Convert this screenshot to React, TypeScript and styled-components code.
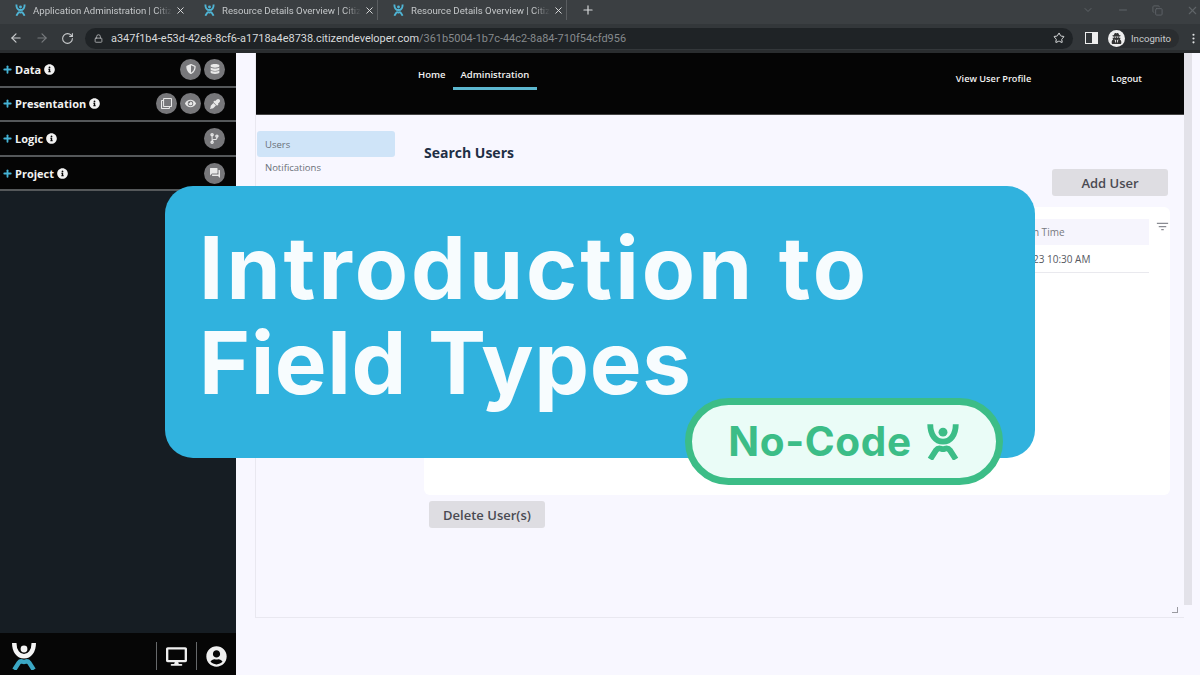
import React from 'react'
import styled, { createGlobalStyle } from 'styled-components'
import { ArrowLeft, ArrowRight, RotateCw, Plus, X, Star, Lock, ChevronDown, Minus, Copy, EllipsisVertical } from 'lucide-react'
import {
  FaInfoCircle,
  FaDatabase,
  FaEye,
  FaCodeBranch,
  FaDesktop,
  FaUserCircle,
  FaRegClone,
  FaUserSecret,
  FaShieldAlt,
  FaEyeDropper,
} from 'react-icons/fa'
import { MdFilterList, MdForum } from 'react-icons/md'

const GlobalStyle = createGlobalStyle`
  html, body {
    margin: 0;
    padding: 0;
    background: #f8f7ff;
  }
  #root {
    width: 1200px;
    height: 675px;
    overflow: hidden;
  }
`

const Page = styled.div`
  position: relative;
  width: 1200px;
  height: 675px;
  display: flex;
  flex-direction: column;
  font-family: 'Open Sans', sans-serif;
  overflow: hidden;
  background: #f8f7ff;
`

const TabStrip = styled.div`
  height: 24px;
  display: flex;
  align-items: center;
  background: #3b3f42;
  color: #c4c7c9;
  font-family: 'Roboto', sans-serif;
  font-size: 9.6px;
`

const Tab = styled.div<{ $divider?: boolean }>`
  width: 189px;
  height: 20px;
  margin-bottom: 4px;
  flex: none;
  display: flex;
  align-items: center;
  padding-left: 15px;
  box-sizing: border-box;
  border-right: ${(p) => (p.$divider ? '1px solid #5a5d60' : '1px solid transparent')};
  color: #c4c7c9;
`

const TabTitle = styled.span`
  margin-left: 7px;
  white-space: nowrap;
  -webkit-mask-image: linear-gradient(to right, #000 88%, transparent);
`

const TabClose = styled.span`
  margin-left: auto;
  margin-right: 2px;
  display: flex;
`

const NewTab = styled.div`
  margin: 0 0 4px 14px;
  color: #d8dadb;
  display: flex;
`

const WindowControls = styled.div`
  margin: 0 0 4px auto;
  display: flex;
  align-items: center;
  gap: 23px;
  padding-right: 1px;
  color: #5f6468;
`

const Toolbar = styled.div`
  height: 29px;
  display: flex;
  align-items: center;
  background: #33373a;
  border-bottom: 3px solid #2a2d2f;
  padding-top: 2px;
  box-sizing: border-box;
  color: #c9cbcd;
`

const NavButtons = styled.div`
  width: 85px;
  flex: none;
  display: flex;
  align-items: center;
  gap: 12px;
  padding-left: 9px;
  box-sizing: border-box;
`

const Omnibox = styled.div`
  width: 988px;
  height: 21px;
  flex: none;
  display: flex;
  align-items: center;
  border-radius: 11px;
  background: #1f2326;
  font-family: 'Roboto', sans-serif;
  font-size: 10.95px;
  padding: 0 8px 0 9px;
  box-sizing: border-box;
  color: #dfe1e2;
`

const UrlHost = styled.span`
  margin-left: 8px;
  color: #d8dadb;
`

const UrlPath = styled.span`
  color: #868a8d;
  flex: 1;
`

const ToolbarRight = styled.div`
  flex: 1;
  display: flex;
  align-items: center;
  padding-left: 12px;
  color: #dfe1e2;
`

const SidePanelIcon = styled.div`
  width: 11px;
  height: 10px;
  border: 1px solid #eee;
  background: linear-gradient(to right, #33373a 55%, #eee 55%);
`

const IncognitoPill = styled.div`
  display: flex;
  align-items: center;
  gap: 6px;
  margin-left: 10px;
  width: 71px;
  height: 19px;
  border-radius: 10px;
  background: #2a2d30;
  font-family: 'Roboto', sans-serif;
  font-size: 9.6px;
  color: #c9cbcd;
`

const IncognitoAvatar = styled.div`
  width: 17px;
  height: 17px;
  border-radius: 50%;
  background: #eee;
  color: #333;
  display: flex;
  align-items: center;
  justify-content: center;
`

const MenuDots = styled.div`
  margin-left: 8px;
  display: flex;
`

const Workspace = styled.div`
  flex: 1;
  display: flex;
  min-height: 0;
`

const Sidebar = styled.aside`
  width: 236px;
  flex: none;
  display: flex;
  flex-direction: column;
  background: #161d23;
`

const SideRow = styled.div`
  height: 34.6px;
  box-sizing: border-box;
  display: flex;
  align-items: center;
  padding: 0 11px 0 2px;
  background: #050505;
  border-bottom: 2px solid #55585a;
  color: #f2f2f2;
  font-size: 11px;
  font-weight: 700;
`

const SidePlus = styled.span`
  display: flex;
  color: #45b4d6;
  margin-right: 2px;
`

const SideInfo = styled.span`
  display: flex;
  margin-left: 3px;
  color: #f2f2f2;
`

const RoundIcons = styled.div`
  margin-left: auto;
  display: flex;
  gap: 3px;
`

const RoundIcon = styled.div`
  width: 21px;
  height: 21px;
  border-radius: 50%;
  background: #77777a;
  color: #e8e8e8;
  display: flex;
  align-items: center;
  justify-content: center;
`

const SideSpacer = styled.div`
  flex: 1;
`

const SideFooter = styled.div`
  height: 42px;
  flex: none;
  background: #060606;
  display: flex;
  align-items: center;
  padding: 4px 9px 0 11px;
  box-sizing: border-box;
  color: #efefef;
`

const FooterDivider = styled.div`
  width: 1px;
  height: 28px;
  background: #66686a;
`

const FooterTools = styled.div`
  margin-left: auto;
  display: flex;
  align-items: center;
  gap: 9px;
`

const Main = styled.main`
  flex: 1;
  display: flex;
  padding-left: 19px;
  background: #f8f7ff;
  min-width: 0;
`

const Panel = styled.div`
  width: 929px;
  height: 565px;
  flex: none;
  display: flex;
  flex-direction: column;
  box-sizing: border-box;
  border-left: 1px solid #e9e8f0;
  border-bottom: 1px solid #e9e8f0;
  position: relative;
`

const AppHeader = styled.header`
  height: 61px;
  flex: none;
  display: flex;
  background: #050505;
  color: #f2f2f2;
  font-size: 9.5px;
  font-weight: 600;
  border-bottom: 1px solid #444;
`

const HeaderNav = styled.nav`
  display: flex;
  padding-left: 155px;
`

const NavItem = styled.div<{ $active?: boolean }>`
  height: 37px;
  padding: 15px 8px 0 7px;
  box-sizing: border-box;
  border-bottom: ${(p) => (p.$active ? '3px solid #5cb7cf' : 'none')};
`

const HeaderRight = styled.div`
  margin-left: auto;
  display: flex;
  gap: 80px;
  padding: 19px 42px 0 0;
  font-size: 9.2px;
`

const PanelBody = styled.div`
  flex: 1;
  display: flex;
  min-height: 0;
`

const SubNav = styled.div`
  width: 168px;
  flex: none;
  padding: 16px 0 0 1px;
  box-sizing: border-box;
  font-size: 9.5px;
  color: #6a7078;
`

const SubNavItem = styled.div<{ $active?: boolean }>`
  width: 138px;
  height: ${(p) => (p.$active ? 26 : 21)}px;
  padding-left: 8px;
  box-sizing: border-box;
  display: flex;
  align-items: center;
  border-radius: 3px;
  background: ${(p) => (p.$active ? '#cfe4f8' : 'transparent')};
`

const Content = styled.div`
  width: 746px;
  display: flex;
  flex-direction: column;
`

const SearchTitle = styled.h2`
  margin: 29px 0 0;
  font-size: 14px;
  line-height: 18px;
  font-weight: 700;
  color: #1f2f45;
`

const ActionRow = styled.div`
  display: flex;
  justify-content: flex-end;
  padding-right: 2px;
  margin-top: 7px;
`

const GreyButton = styled.button`
  width: 116px;
  height: 27px;
  padding: 0;
  border: none;
  border-radius: 3px;
  background: #dedde2;
  color: #4a4a52;
  font-family: 'Open Sans', sans-serif;
  font-size: 13px;
  font-weight: 600;
`

const TableCard = styled.div`
  height: 288px;
  margin-top: 11px;
  box-sizing: border-box;
  padding: 12px 21px 0 0;
  border-radius: 6px;
  background: #fff;
  position: relative;
  font-size: 10px;
  color: #55585f;
`

const TableHead = styled.div`
  height: 26px;
  display: flex;
  align-items: center;
  padding-left: 568px;
  background: #f6f5fd;
  color: #77797f;
`

const TableRow = styled.div`
  height: 28px;
  display: flex;
  align-items: center;
  padding-left: 573px;
  border-bottom: 1px solid #e9e9ee;
  box-sizing: border-box;
`

const FilterButton = styled.div`
  position: absolute;
  top: 12px;
  right: 0;
  color: #8a8c92;
  display: flex;
`

const DeleteRow = styled.div`
  margin: 6px 0 0 5px;
`

const Scrollbar = styled.div`
  width: 8px;
  height: 552px;
  flex: none;
  background: #e3e2e9;
`

const ResizeHandle = styled.div`
  position: absolute;
  right: 6px;
  bottom: 4px;
  width: 5px;
  height: 5px;
  border-right: 1.5px solid #9a9aa0;
  border-bottom: 1.5px solid #9a9aa0;
`

const Banner = styled.div`
  position: absolute;
  left: 165px;
  top: 186px;
  width: 870px;
  height: 272px;
  box-sizing: border-box;
  padding: 34px 0 0 34px;
  border-radius: 28px;
  background: #30b2de;
`

const BannerLine = styled.div<{ $spacing: number }>`
  font-family: 'Inter', sans-serif;
  font-size: 87px;
  line-height: 95px;
  font-weight: 700;
  letter-spacing: ${(p) => p.$spacing}px;
  color: #f7fcfe;
  white-space: nowrap;
`

const Pill = styled.div`
  position: absolute;
  left: 685px;
  top: 398px;
  width: 318px;
  height: 87px;
  box-sizing: border-box;
  display: flex;
  align-items: center;
  justify-content: center;
  gap: 14px;
  border: 7px solid #3cbd87;
  border-radius: 44px;
  background: #eafcf7;
  color: #3cbd87;
  font-family: 'Inter', sans-serif;
  font-size: 40.5px;
  font-weight: 700;
  letter-spacing: 0.6px;
`

const Logo = ({ size, top, bottom }: { size: number; top: string; bottom: string }) => (
  <svg width={size} height={size * 1.1} viewBox='0 0 32 35' fill='none'>
    <circle cx='16' cy='8.5' r='4.2' fill={top} />
    <path d='M4 1C4 11 9 17.5 16 17.5C23 17.5 28 11 28 1' stroke={top} strokeWidth='5.5' />
    <path d='M4 34L9.5 25.5C12 22 14 24.5 16 24.5C18 24.5 20 22 22.5 25.5L28 34' stroke={bottom} strokeWidth='5.5' />
  </svg>
)

const sections = [
  { name: 'Data', icons: [<FaShieldAlt size={10} key='a' />, <FaDatabase size={10} key='b' />] },
  {
    name: 'Presentation',
    icons: [<FaRegClone size={11} key='a' />, <FaEye size={11} key='b' />, <FaEyeDropper size={10} key='c' />],
  },
  { name: 'Logic', icons: [<FaCodeBranch size={11} key='a' />] },
  { name: 'Project', icons: [<MdForum size={12} key='a' />] },
]

const tabs = ['Application Administration | Citiz', 'Resource Details Overview | Citiz', 'Resource Details Overview | Citiz']

const App = () => (
  <Page>
    <GlobalStyle />
    <TabStrip>
      {tabs.map((title, index) => (
        <Tab key={index} $divider={index > 0}>
          <Logo size={11} top='#4fb4d4' bottom='#4fb4d4' />
          <TabTitle>{title}</TabTitle>
          <TabClose>
            <X size={11} color='#e4e5e6' />
          </TabClose>
        </Tab>
      ))}
      <NewTab>
        <Plus size={14} />
      </NewTab>
      <WindowControls>
        <ChevronDown size={12} />
        <Minus size={12} />
        <Copy size={11} />
        <X size={13} />
      </WindowControls>
    </TabStrip>
    <Toolbar>
      <NavButtons>
        <ArrowLeft size={14} />
        <ArrowRight size={14} color='#777a7d' />
        <RotateCw size={13} />
      </NavButtons>
      <Omnibox>
        <Lock size={9} color='#c4c6c8' />
        <UrlHost>a347f1b4-e53d-42e8-8cf6-a1718a4e8738.citizendeveloper.com</UrlHost>
        <UrlPath>/361b5004-1b7c-44c2-8a84-710f54cfd956</UrlPath>
        <Star size={12} />
      </Omnibox>
      <ToolbarRight>
        <SidePanelIcon />
        <IncognitoPill>
          <IncognitoAvatar>
            <FaUserSecret size={11} />
          </IncognitoAvatar>
          Incognito
        </IncognitoPill>
        <MenuDots>
          <EllipsisVertical size={13} />
        </MenuDots>
      </ToolbarRight>
    </Toolbar>
    <Workspace>
      <Sidebar>
        {sections.map((section) => (
          <SideRow key={section.name}>
            <SidePlus>
              <Plus size={11} strokeWidth={4} />
            </SidePlus>
            {section.name}
            <SideInfo>
              <FaInfoCircle size={11} />
            </SideInfo>
            <RoundIcons>
              {section.icons.map((icon, index) => (
                <RoundIcon key={index}>{icon}</RoundIcon>
              ))}
            </RoundIcons>
          </SideRow>
        ))}
        <SideSpacer />
        <SideFooter>
          <Logo size={26} top='#f4f4f4' bottom='#3ba7c4' />
          <FooterTools>
            <FooterDivider />
            <FaDesktop size={21} />
            <FooterDivider />
            <FaUserCircle size={21} />
          </FooterTools>
        </SideFooter>
      </Sidebar>
      <Main>
        <Panel>
          <AppHeader>
            <HeaderNav>
              <NavItem>Home</NavItem>
              <NavItem $active>Administration</NavItem>
            </HeaderNav>
            <HeaderRight>
              <span>View User Profile</span>
              <span>Logout</span>
            </HeaderRight>
          </AppHeader>
          <PanelBody>
            <SubNav>
              <SubNavItem $active>Users</SubNavItem>
              <SubNavItem>Notifications</SubNavItem>
            </SubNav>
            <Content>
              <SearchTitle>Search Users</SearchTitle>
              <ActionRow>
                <GreyButton>Add User</GreyButton>
              </ActionRow>
              <TableCard>
                <TableHead>Last Login Time</TableHead>
                <TableRow>1/12/2023 10:30 AM</TableRow>
                <FilterButton>
                  <MdFilterList size={15} />
                </FilterButton>
              </TableCard>
              <DeleteRow>
                <GreyButton>Delete User(s)</GreyButton>
              </DeleteRow>
            </Content>
          </PanelBody>
          <ResizeHandle />
        </Panel>
        <Scrollbar />
      </Main>
    </Workspace>
    <Banner>
      <BannerLine $spacing={3}>Introduction to</BannerLine>
      <BannerLine $spacing={0.6}>Field Types</BannerLine>
    </Banner>
    <Pill>
      No-Code
      <Logo size={34} top='#3cbd87' bottom='#3cbd87' />
    </Pill>
  </Page>
)

export default App
